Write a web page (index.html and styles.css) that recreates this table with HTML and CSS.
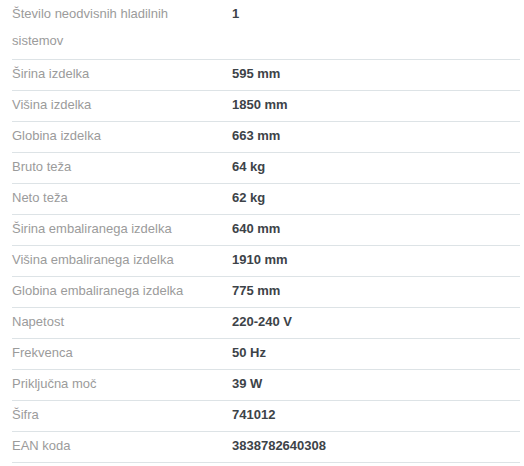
FILE: index.html
```html
<!DOCTYPE html>
<html>
<head>
<meta charset="utf-8">
<link rel="stylesheet" href="styles.css">
</head>
<body>
<table class="specs">
<tbody>
<tr class="specs__row specs__row--first"><td class="label">Število neodvisnih hladilnih sistemov</td><td class="value">1</td></tr>
<tr class="specs__row"><td class="label">Širina izdelka</td><td class="value">595 mm</td></tr>
<tr class="specs__row"><td class="label">Višina izdelka</td><td class="value">1850 mm</td></tr>
<tr class="specs__row"><td class="label">Globina izdelka</td><td class="value">663 mm</td></tr>
<tr class="specs__row"><td class="label">Bruto teža</td><td class="value">64 kg</td></tr>
<tr class="specs__row"><td class="label">Neto teža</td><td class="value">62 kg</td></tr>
<tr class="specs__row"><td class="label">Širina embaliranega izdelka</td><td class="value">640 mm</td></tr>
<tr class="specs__row"><td class="label">Višina embaliranega izdelka</td><td class="value">1910 mm</td></tr>
<tr class="specs__row"><td class="label">Globina embaliranega izdelka</td><td class="value">775 mm</td></tr>
<tr class="specs__row"><td class="label">Napetost</td><td class="value">220-240 V</td></tr>
<tr class="specs__row"><td class="label">Frekvenca</td><td class="value">50 Hz</td></tr>
<tr class="specs__row"><td class="label">Priključna moč</td><td class="value">39 W</td></tr>
<tr class="specs__row"><td class="label">Šifra</td><td class="value">741012</td></tr>
<tr class="specs__row"><td class="label">EAN koda</td><td class="value">3838782640308</td></tr>
</tbody>
</table>
</body>
</html>
```
FILE: styles.css
```css
html, body {
  margin: 0;
  padding: 0;
  background: #fff;
}
body {
  padding: 0 4px 0 12px;
  font-family: "Liberation Sans", Arial, Helvetica, sans-serif;
  font-size: 13px;
}
.specs {
  width: 100%;
  border-collapse: collapse;
}
.specs td {
  padding: 0 0 3px;
  line-height: 27px;
  border-bottom: 1px solid #dde3e6;
  vertical-align: top;
}
.specs__row--first td {
  padding-bottom: 5px;
}
.specs .label {
  width: 200px;
  padding-right: 20px;
  color: #9b9b9b;
}
.specs .value {
  color: #3d4348;
  font-weight: bold;
}
```
